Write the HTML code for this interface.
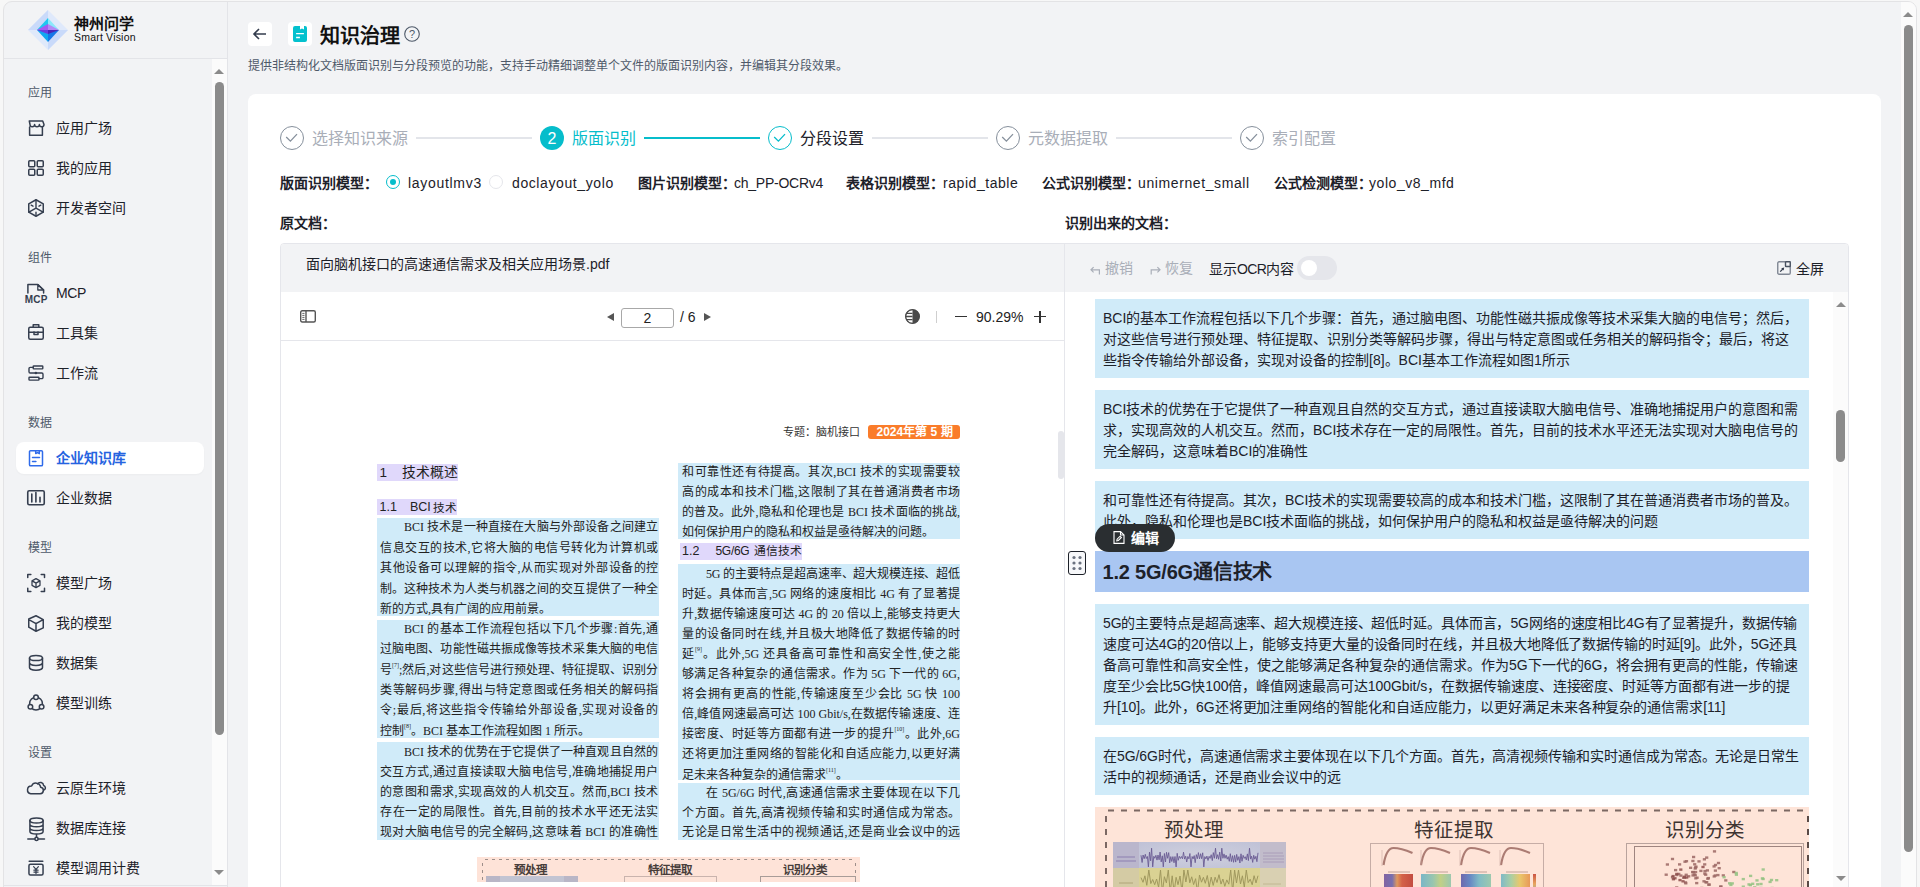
<!DOCTYPE html>
<html lang="zh-CN"><head><meta charset="utf-8"><title>知识治理</title>
<style>
*{box-sizing:border-box;margin:0;padding:0}
html,body{width:1920px;height:887px;overflow:hidden;background:#f7f7f7;font-family:"Liberation Sans",sans-serif;color:#1d2129}
.a{position:absolute}
.frame{left:3px;top:1px;width:1914px;height:1000px;border:1px solid #e3e3e5;border-radius:9px;background:#f2f3f5}
.side-div{left:227px;top:2px;width:1px;height:885px;background:#e3e4e8}
.logo-div{left:4px;top:58px;width:223px;height:1px;background:#e3e4e8}
.sec{left:28px;font-size:12px;color:#4e5969;line-height:16px}
.item{left:16px;width:188px;height:32px;border-radius:8px}
.item svg{position:absolute;left:12px;top:8px}
.item span{position:absolute;left:40px;top:0;line-height:32px;font-size:14px;color:#1d2129}
.item.on{background:#fff;box-shadow:0 1px 2px rgba(0,0,0,0.03)}
.item.on span{color:#2563e0;font-weight:bold}
.sb-track{background:#fbfbfb}
.thumb{background:#8b8b8b;border-radius:5px}
.tri-up{width:0;height:0;border-left:5px solid transparent;border-right:5px solid transparent;border-bottom:5px solid #8b8b8b}
.tri-dn{width:0;height:0;border-left:5px solid transparent;border-right:5px solid transparent;border-top:5px solid #8b8b8b}
</style></head><body>
<div class="a frame"></div>

<!-- SIDEBAR -->
<svg class="a" style="left:28px;top:10px" width="40" height="40" viewBox="0 0 40 40">
  <polygon points="20,0 40,20 20,40 0,20" fill="#dfe9fb"/>
  <polygon points="20,0 0,20 20,20" fill="#c9dafa"/>
  <polygon points="20,40 40,20 20,20" fill="#c9dafa"/>
  <polygon points="20,8 9,20 20,20" fill="#1fc8f0"/>
  <polygon points="20,8 31,20 20,20" fill="#8ae8fb"/>
  <polygon points="20,20 9,20 20,32" fill="#12a8f0"/>
  <polygon points="20,20 31,20 20,32" fill="#1677e8"/>
  <polygon points="20,14 9,20 20,20" fill="#a35cf2"/>
  <polygon points="20,14 31,20 20,20" fill="#b28af6"/>
  <polygon points="9,20 20,20 20,24" fill="#6a3fe0"/>
  <polygon points="31,20 20,20 20,24" fill="#4a25b8"/>
</svg>
<div class="a" style="left:74px;top:14px;font-size:15px;font-weight:bold;line-height:20px;color:#111">神州问学</div>
<div class="a" style="left:74px;top:31px;font-size:10.5px;line-height:13px;color:#111;letter-spacing:0.2px">Smart Vision</div>
<div class="a logo-div"></div>
<div class="a side-div"></div>
<div class="a" style="left:4px;top:885px;width:223px;height:1px;background:#e3e4e8"></div>

<div class="a sec" style="top:85px">应用</div>
<div class="a item" style="top:112px"><span>应用广场</span></div>
<div class="a item" style="top:152px"><span>我的应用</span></div>
<div class="a item" style="top:192px"><span>开发者空间</span></div>

<div class="a sec" style="top:250px">组件</div>
<div class="a item" style="top:277px"><span style="letter-spacing:-0.4px">MCP</span></div>
<div class="a item" style="top:317px"><span>工具集</span></div>
<div class="a item" style="top:357px"><span>工作流</span></div>

<div class="a sec" style="top:415px">数据</div>
<div class="a item on" style="top:442px"><span>企业知识库</span></div>
<div class="a item" style="top:482px"><span>企业数据</span></div>

<div class="a sec" style="top:540px">模型</div>
<div class="a item" style="top:567px"><span>模型广场</span></div>
<div class="a item" style="top:607px"><span>我的模型</span></div>
<div class="a item" style="top:647px"><span>数据集</span></div>
<div class="a item" style="top:687px"><span>模型训练</span></div>

<div class="a sec" style="top:745px">设置</div>
<div class="a item" style="top:772px"><span>云原生环境</span></div>
<div class="a item" style="top:812px"><span>数据库连接</span></div>
<div class="a item" style="top:852px"><span>模型调用计费</span></div>

<svg class="a" style="left:0;top:0" width="228" height="887" viewBox="0 0 228 887" fill="none" stroke="#353e4f" stroke-width="1.5" stroke-linejoin="round" stroke-linecap="round">
<path d="M29.3 121h13.4l1.3 3.5c0 1.3-1 2.3-2.3 2.3s-2.3-1-2.3-2.3c0 1.3-1.1 2.3-2.4 2.3s-2.4-1-2.4-2.3c0 1.3-1.1 2.3-2.4 2.3s-2.2-1-2.2-2.3z"/><path d="M29.6 127v8.3h12.8V127"/>
<rect x="28.75" y="160.75" width="6" height="6" rx="1"/><rect x="37.25" y="160.75" width="6" height="6" rx="1"/><rect x="28.75" y="169.25" width="6" height="6" rx="1"/><rect x="37.25" y="169.25" width="6" height="6" rx="1"/>
<path d="M36 199.75l7.25 4.1v8.3L36 216.25l-7.25-4.1v-8.3z"/><path d="M36 200v8.1M36 208.1l-7.1 4.05M36 208.1l7.1 4.05M36 212.2v2.4M31.2 205.2l1.8 1M40.8 205.2l-1.8 1" stroke-width="1.4"/>
<path d="M27.9 293V284.6h9.9l5.8 5.4V293"/><path d="M37.8 284.6v5.4h5.8z" stroke-width="1.3"/>
<text x="24.8" y="303" font-size="10" font-weight="bold" fill="#353e4f" stroke="none" font-family="Liberation Sans" textLength="22.5">MCP</text>
<path d="M33.2 327.2v-2.4h5.6v2.4"/><rect x="28.75" y="327.2" width="14.5" height="12" rx="1.5"/><path d="M28.75 332.2h14.5M34 331.8v2.6h4v-2.6"/>
<rect x="33.2" y="366" width="9.6" height="2.9" rx="0.6" stroke-width="1.4"/><rect x="29" y="377.2" width="10" height="2.9" rx="0.6" stroke-width="1.4"/><path d="M33.2 367.4H30.2a1.2 1.2 0 0 0-1.2 1.2v3.2a1.2 1.2 0 0 0 1.2 1.2h11.6a1.2 1.2 0 0 1 1.2 1.2v3.2a1.2 1.2 0 0 1-1.2 1.2H39" stroke-width="1.4"/><circle cx="35.9" cy="373" r="1.3" fill="#353e4f" stroke="none"/>
<g stroke="#2f6bea"><path d="M30.6 450.75h10.8a1.1 1.1 0 0 1 1.1 1.1v12.8a1.1 1.1 0 0 1-1.1 1.1H30.6a1.1 1.1 0 0 1-1.1-1.1V451.85a1.1 1.1 0 0 1 1.1-1.1z"/><path d="M35.7 451v2.6l1.8-1 1.8 1V451M32.5 457.6h7M32.5 461.5h3.4"/></g>
<rect x="27.75" y="490.75" width="16.5" height="14" rx="1.5" stroke-width="1.6"/><path d="M31.8 494v8M35.9 492.6v9.4M40 497.2v4.8" stroke-width="1.6"/>
<path d="M27.75 577.6v-3.1h3.1M41.2 574.5h3.3v3.1M44.5 588.2v3.3h-3.3M30.85 591.5h-3.1v-3.3"/><path d="M36 578.6l4 2.25v4.5L36 587.6l-4-2.25v-4.5zM32.2 580.9l3.8 2.2 3.8-2.2M36 583.1v4.3" stroke-width="1.3"/>
<path d="M36 615.75l7.25 3.9v8.2L36 631.25l-7.25-4.1v-8.1zM28.9 619.7l7.1 3.9 7.1-3.9M36 623.6v7.5"/>
<ellipse cx="36" cy="658" rx="6.5" ry="2.6"/><path d="M29.5 658v9.6c0 1.4 2.9 2.6 6.5 2.6s6.5-1.2 6.5-2.6V658M29.5 662.8c0 1.4 2.9 2.6 6.5 2.6s6.5-1.2 6.5-2.6"/>
<circle cx="36" cy="703.6" r="6.4"/><circle cx="36" cy="697.2" r="2.3" fill="#f2f3f5"/><circle cx="30.4" cy="706.8" r="2.3" fill="#f2f3f5"/><circle cx="41.6" cy="706.8" r="2.3" fill="#f2f3f5"/><path d="M31 710h10" stroke="#f2f3f5" stroke-width="0"/>
<path d="M30.8 793.7h9.4a3.3 3.3 0 0 0 .4-6.55 4.7 4.7 0 0 0-9-1.1 3.85 3.85 0 0 0-.8 7.65z"/><path d="M37.6 783.9a3.3 3.3 0 0 1 6 1.6 2.5 2.5 0 0 1 .9 4.3"/>
<ellipse cx="36.5" cy="820.6" rx="6.6" ry="2.5"/><path d="M29.9 820.6v10.9c0 1.4 2.95 2.5 6.6 2.5s6.6-1.1 6.6-2.5V820.6M29.9 824.3c0 1.4 2.95 2.5 6.6 2.5s6.6-1.1 6.6-2.5M29.9 827.9c0 1.4 2.95 2.5 6.6 2.5s6.6-1.1 6.6-2.5M36.5 834.1v3M27.8 838.9h7M38.1 838.9h6.4"/><circle cx="36.5" cy="838.9" r="1.6"/>
<path d="M29.2 861.2h13.6"/><rect x="28.95" y="864.3" width="14.1" height="10.6" rx="1.5"/><path d="M33.6 866.7l2.4 2.7 2.4-2.7M36 869.4v4.2M33.9 870.2h4.2M33.9 872.1h4.2" stroke-width="1.2"/>
</svg>
<div class="a sb-track" style="left:212px;top:59px;width:15px;height:826px"></div>
<div class="a tri-up" style="left:214px;top:69px"></div>
<div class="a thumb" style="left:215px;top:82px;width:9px;height:653px"></div>
<div class="a tri-dn" style="left:214px;top:870px"></div>

<!-- MAIN HEADER -->
<div class="a" style="left:248px;top:22px;width:24px;height:24px;background:#fff;border-radius:4px"></div>
<svg class="a" style="left:252px;top:26px" width="16" height="16" viewBox="0 0 16 16" fill="none" stroke="#333c4d" stroke-width="1.6"><path d="M14 8H2.5M7 3L2 8l5 5"/></svg>
<div class="a" style="left:288px;top:22px;width:24px;height:24px;background:#fff;border-radius:4px"></div>
<svg class="a" style="left:293px;top:26px" width="14" height="16" viewBox="0 0 14 16"><path d="M2 0h5v3.6l2-1.2 2 1.2V0h1a2 2 0 0 1 2 2v12a2 2 0 0 1-2 2H2a2 2 0 0 1-2-2V2a2 2 0 0 1 2-2z" fill="#03c1ce"/><path d="M3.1 7.6h7.8M3.1 11.5h3.8" stroke="#fff" stroke-width="1.3"/></svg>
<div class="a" style="left:320px;top:21.5px;font-size:20px;font-weight:bold;line-height:28px;color:#111">知识治理</div>
<svg class="a" style="left:404px;top:26px" width="16" height="16" viewBox="0 0 16 16"><circle cx="8" cy="8" r="7.3" fill="none" stroke="#4e5969" stroke-width="1.1"/><text x="8" y="12" text-anchor="middle" font-size="11" fill="#4e5969" font-family="Liberation Sans">?</text></svg>
<div class="a" style="left:248px;top:57.5px;font-size:12px;line-height:17px;color:#4e5969">提供非结构化文档版面识别与分段预览的功能，支持手动精细调整单个文件的版面识别内容，并编辑其分段效果。</div>

<!-- CARD -->
<div class="a" style="left:248px;top:94px;width:1633px;height:900px;background:#fff;border-radius:8px"></div>

<!-- main scrollbar -->
<div class="a sb-track" style="left:1901px;top:2px;width:15px;height:885px;border-top-right-radius:8px"></div>
<div class="a tri-up" style="left:1903px;top:12px"></div>
<div class="a thumb" style="left:1904px;top:25px;width:9px;height:827px"></div>

<style>
.step-c{width:24px;height:24px;border-radius:50%;border:1px solid #86909c;top:126px}
.step-t{top:128px;font-size:16px;line-height:22px;color:#a9aeb8}
.step-l{top:137px;height:2px;background:#e3e5ea;width:116px}
.lbl{top:173px;font-size:14px;line-height:21px;font-weight:bold;color:#1d2129}
.val{top:173px;font-size:14px;line-height:21px;color:#1d2129}
.radio{top:175px;width:14px;height:14px;border-radius:50%;border:1px solid #e5e6eb;background:#fff}
.radio.on{border:1.5px solid #06bdcb}
.radio.on:after{content:"";position:absolute;left:2.5px;top:2.5px;width:6px;height:6px;border-radius:50%;background:#06bdcb}
</style>
<!-- stepper -->
<div class="a step-c" style="left:280px"></div>
<svg class="a" style="left:280px;top:126px" width="24" height="24" viewBox="0 0 24 24" fill="none" stroke="#86909c" stroke-width="1.3"><path d="M6.2 11l4.2 4.1L17 8.1"/></svg>
<div class="a step-t" style="left:312px">选择知识来源</div>
<div class="a step-l" style="left:416px"></div>
<div class="a" style="left:540px;top:126px;width:24px;height:24px;border-radius:50%;background:#06bdcb;color:#fff;font-size:16px;line-height:26.5px;text-align:center">2</div>
<div class="a step-t" style="left:572px;color:#06bdcb">版面识别</div>
<div class="a step-l" style="left:644px;height:2px;top:137px;background:#06bdcb"></div>
<div class="a step-c" style="left:768px;border-color:#06bdcb"></div>
<svg class="a" style="left:768px;top:126px" width="24" height="24" viewBox="0 0 24 24" fill="none" stroke="#06bdcb" stroke-width="1.3"><path d="M6.2 11l4.2 4.1L17 8.1"/></svg>
<div class="a step-t" style="left:800px;color:#1d2129">分段设置</div>
<div class="a step-l" style="left:872px"></div>
<div class="a step-c" style="left:996px"></div>
<svg class="a" style="left:996px;top:126px" width="24" height="24" viewBox="0 0 24 24" fill="none" stroke="#86909c" stroke-width="1.3"><path d="M6.2 11l4.2 4.1L17 8.1"/></svg>
<div class="a step-t" style="left:1028px">元数据提取</div>
<div class="a step-l" style="left:1116px"></div>
<div class="a step-c" style="left:1240px"></div>
<svg class="a" style="left:1240px;top:126px" width="24" height="24" viewBox="0 0 24 24" fill="none" stroke="#86909c" stroke-width="1.3"><path d="M6.2 11l4.2 4.1L17 8.1"/></svg>
<div class="a step-t" style="left:1272px">索引配置</div>

<!-- models row -->
<div class="a lbl" style="left:280px">版面识别模型：</div>
<div class="a radio on" style="left:386px"></div>
<div class="a val" style="left:408px;letter-spacing:0.7px">layoutlmv3</div>
<div class="a radio" style="left:489px"></div>
<div class="a val" style="left:512px;letter-spacing:0.6px">doclayout_yolo</div>
<div class="a lbl" style="left:638px">图片识别模型：</div>
<div class="a val" style="left:734px;letter-spacing:-0.25px">ch_PP-OCRv4</div>
<div class="a lbl" style="left:846px">表格识别模型：</div>
<div class="a val" style="left:943px;letter-spacing:0.55px">rapid_table</div>
<div class="a lbl" style="left:1042px">公式识别模型：</div>
<div class="a val" style="left:1138px;letter-spacing:0.6px">unimernet_small</div>
<div class="a lbl" style="left:1274px">公式检测模型：</div>
<div class="a val" style="left:1369px;letter-spacing:0.55px">yolo_v8_mfd</div>

<div class="a lbl" style="left:280px;top:213px">原文档：</div>
<div class="a lbl" style="left:1065px;top:213px">识别出来的文档：</div>

<!-- panels frame -->
<div class="a" style="left:280px;top:243px;width:1569px;height:700px;border:1px solid #e5e6eb;border-radius:4px 4px 0 0;background:#fff"></div>
<div class="a" style="left:281px;top:244px;width:783px;height:48px;background:#f2f3f5;border-top-left-radius:3px"></div>
<div class="a" style="left:1065px;top:244px;width:783px;height:48px;background:#f2f3f5;border-top-right-radius:3px"></div>
<div class="a" style="left:1064px;top:244px;width:1px;height:643px;background:#e5e6eb"></div>
<div class="a" style="left:281px;top:340px;width:783px;height:1px;background:#e5e6eb"></div>

<style>
.pdf{font-family:"Liberation Serif",serif;color:#222}
.pb{background:#d0ebf9}
.ph{background:#e0d8fb}
.pl{position:absolute;left:0;white-space:nowrap;font-size:12px;line-height:20px;height:20px;text-align:justify;text-align-last:justify}
.pl.s{text-align:left;text-align-last:left}
.pl sup{font-size:6px;vertical-align:top;line-height:0;position:relative;top:5px}
.rb{position:absolute;left:1095px;width:714px;background:#d0ebf9;padding:9px 8px 7px}
.rl{white-space:nowrap;font-size:14px;line-height:21px;height:21px;color:#1d2129}
</style>
<!-- left header -->
<div class="a" style="left:306px;top:254px;font-size:14px;line-height:21px;color:#1d2129">面向脑机接口的高速通信需求及相关应用场景.pdf</div>
<!-- pdf toolbar -->
<svg class="a" style="left:300px;top:310px" width="16" height="13" viewBox="0 0 16 13" fill="none" stroke="#555" stroke-width="1.4"><rect x="0.7" y="0.7" width="14.6" height="11.3" rx="1.5"/><path d="M6 1v11"/><path d="M2.3 3.4h2.2M2.3 5.4h2.2M2.3 7.4h2.2M2.3 9.4h2.2" stroke-width="0.9"/></svg>
<div class="a" style="left:607px;top:313px;width:0;height:0;border-top:4px solid transparent;border-bottom:4px solid transparent;border-right:7px solid #555"></div>
<div class="a" style="left:621px;top:308px;width:53px;height:20px;border:1px solid #a8a8a8;border-radius:3px;background:#fff;font-size:14px;line-height:18px;text-align:center;color:#222">2</div>
<div class="a" style="left:680px;top:307px;font-size:14px;line-height:20px;color:#222">/ 6</div>
<div class="a" style="left:704px;top:313px;width:0;height:0;border-top:4px solid transparent;border-bottom:4px solid transparent;border-left:7px solid #555"></div>
<svg class="a" style="left:905px;top:309px" width="15" height="15" viewBox="0 0 15 15"><circle cx="7.5" cy="7.5" r="7" fill="#4a4a4a"/><path d="M7.5 1A6.5 6.5 0 0 0 7.5 14" fill="#fff"/><path d="M1 4.3h6.5M0.8 7.5h6.7M1 10.7h6.5" stroke="#4a4a4a" stroke-width="1.3"/><circle cx="7.5" cy="7.5" r="6.9" fill="none" stroke="#4a4a4a" stroke-width="1.2"/></svg>
<div class="a" style="left:936px;top:311px;width:1px;height:12px;background:#cfcfcf"></div>
<div class="a" style="left:955px;top:316px;width:12px;height:1.2px;background:#333"></div>
<div class="a" style="left:976px;top:307px;font-size:14px;line-height:21px;color:#222">90.29%</div>
<div class="a" style="left:1034px;top:316px;width:12px;height:1.2px;background:#333"></div>
<div class="a" style="left:1039.4px;top:310.5px;width:1.2px;height:12px;background:#333"></div>
<!-- pdf scrollbar thumb -->
<div class="a" style="left:1058px;top:431px;width:6px;height:48px;border-radius:3px;background:#e5e6eb"></div>

<!-- PDF PAGE -->
<div class="pdf">
<div class="a" style="left:783px;top:424px;font-size:11px;line-height:16px;color:#333">专题：脑机接口</div>
<div class="a" style="left:867.5px;top:425px;width:92px;height:14px;border-radius:3px;background:#fa7c2a;color:#fff;font-family:'Liberation Sans',sans-serif;font-weight:bold;font-size:12px;padding-left:2px;line-height:14px;text-align:center">2024年第 5 期</div>

<div class="a ph" style="left:376.5px;top:464px;width:81px;height:17px"><span style="position:absolute;top:0;line-height:17px;font-family:'Liberation Sans',sans-serif;color:#222;white-space:nowrap;left:3px;font-size:13.5px">1</span><span style="position:absolute;top:0;line-height:17px;font-family:'Liberation Sans',sans-serif;color:#222;white-space:nowrap;left:25.5px;font-size:13.8px">技术概述</span></div>
<div class="a ph" style="left:376.5px;top:498.5px;width:80.5px;height:16.5px"><span style="position:absolute;top:0;line-height:17px;font-family:'Liberation Sans',sans-serif;color:#222;white-space:nowrap;left:3px;font-size:12.5px">1.1</span><span style="position:absolute;top:0;line-height:17px;font-family:'Liberation Sans',sans-serif;color:#222;white-space:nowrap;left:33.5px;font-size:12.5px">BCI</span><span style="position:absolute;top:0;line-height:17px;font-family:'Liberation Sans',sans-serif;color:#222;white-space:nowrap;left:56.5px;font-size:11.6px">技术</span></div>

<div class="a pb" style="left:376.5px;top:518px;width:282px;height:97.5px"></div>
<div class="a" style="left:380px;top:517px;width:278px">
<div class="pl" style="top:0;left:24px;width:254px">BCI 技术是一种直接在大脑与外部设备之间建立</div>
<div class="pl" style="top:20.5px;width:278px">信息交互的技术,它将大脑的电信号转化为计算机或</div>
<div class="pl" style="top:41px;width:278px">其他设备可以理解的指令,从而实现对外部设备的控</div>
<div class="pl" style="top:61.5px;width:278px">制。这种技术为人类与机器之间的交互提供了一种全</div>
<div class="pl s" style="top:82px">新的方式,具有广阔的应用前景。</div>
</div>

<div class="a pb" style="left:376.5px;top:619.5px;width:282px;height:118px"></div>
<div class="a" style="left:380px;top:619px;width:278px">
<div class="pl" style="top:0;left:24px;width:254px">BCI 的基本工作流程包括以下几个步骤:首先,通</div>
<div class="pl" style="top:20.36px;width:278px">过脑电图、功能性磁共振成像等技术采集大脑的电信</div>
<div class="pl" style="top:40.72px;width:278px">号<sup>[7]</sup>;然后,对这些信号进行预处理、特征提取、识别分</div>
<div class="pl" style="top:61.08px;width:278px">类等解码步骤,得出与特定意图或任务相关的解码指</div>
<div class="pl" style="top:81.44px;width:278px">令;最后,将这些指令传输给外部设备,实现对设备的</div>
<div class="pl s" style="top:101.80px">控制<sup>[8]</sup>。BCI 基本工作流程如图 1 所示。</div>
</div>

<div class="a pb" style="left:376.5px;top:742px;width:282px;height:97.5px"></div>
<div class="a" style="left:380px;top:742px;width:278px">
<div class="pl" style="top:0;left:24px;width:254px">BCI 技术的优势在于它提供了一种直观且自然的</div>
<div class="pl" style="top:20px;width:278px">交互方式,通过直接读取大脑电信号,准确地捕捉用户</div>
<div class="pl" style="top:40px;width:278px">的意图和需求,实现高效的人机交互。然而,BCI 技术</div>
<div class="pl" style="top:60px;width:278px">存在一定的局限性。首先,目前的技术水平还无法实</div>
<div class="pl" style="top:80px;width:278px">现对大脑电信号的完全解码,这意味着 BCI 的准确性</div>
</div>

<div class="a pb" style="left:677.5px;top:462.5px;width:282.5px;height:76.5px"></div>
<div class="a" style="left:682px;top:462px;width:278px">
<div class="pl" style="top:0;width:278px">和可靠性还有待提高。其次,BCI 技术的实现需要较</div>
<div class="pl" style="top:20px;width:278px">高的成本和技术门槛,这限制了其在普通消费者市场</div>
<div class="pl" style="top:40px;width:278px">的普及。此外,隐私和伦理也是 BCI 技术面临的挑战,</div>
<div class="pl s" style="top:60px">如何保护用户的隐私和权益是亟待解决的问题。</div>
</div>

<div class="a ph" style="left:680px;top:543px;width:122px;height:17px"><span style="position:absolute;top:0;line-height:17px;font-family:'Liberation Sans',sans-serif;color:#222;white-space:nowrap;left:2px;font-size:12.5px">1.2</span><span style="position:absolute;top:0;line-height:17px;font-family:'Liberation Sans',sans-serif;color:#222;white-space:nowrap;left:35.5px;font-size:12px;letter-spacing:-0.3px">5G/6G</span><span style="position:absolute;top:0;line-height:17px;font-family:'Liberation Sans',sans-serif;color:#222;white-space:nowrap;left:74px;font-size:11.8px">通信技术</span></div>

<div class="a pb" style="left:677.5px;top:564px;width:282.5px;height:215.5px"></div>
<div class="a" style="left:682px;top:563.5px;width:278px">
<div class="pl" style="top:0;left:24px;width:254px;letter-spacing:-0.2px">5G 的主要特点是超高速率、超大规模连接、超低</div>
<div class="pl" style="top:20.1px;width:278px">时延。具体而言,5G 网络的速度相比 4G 有了显著提</div>
<div class="pl" style="top:40.2px;width:278px">升,数据传输速度可达 4G 的 20 倍以上,能够支持更大</div>
<div class="pl" style="top:60.3px;width:278px">量的设备同时在线,并且极大地降低了数据传输的时</div>
<div class="pl" style="top:80.4px;width:278px">延<sup>[9]</sup>。此外,5G 还具备高可靠性和高安全性,使之能</div>
<div class="pl" style="top:100.5px;width:278px">够满足各种复杂的通信需求。作为 5G 下一代的 6G,</div>
<div class="pl" style="top:120.6px;width:278px">将会拥有更高的性能,传输速度至少会比 5G 快 100</div>
<div class="pl" style="top:140.7px;width:278px">倍,峰值网速最高可达 100 Gbit/s,在数据传输速度、连</div>
<div class="pl" style="top:160.8px;width:278px">接密度、时延等方面都有进一步的提升<sup>[10]</sup>。此外,6G</div>
<div class="pl" style="top:180.9px;width:278px">还将更加注重网络的智能化和自适应能力,以更好满</div>
<div class="pl s" style="top:201.0px">足未来各种复杂的通信需求<sup>[11]</sup>。</div>
</div>

<div class="a pb" style="left:677.5px;top:783px;width:282.5px;height:57px"></div>
<div class="a" style="left:682px;top:783px;width:278px">
<div class="pl" style="top:0;left:24px;width:254px">在 5G/6G 时代,高速通信需求主要体现在以下几</div>
<div class="pl" style="top:20px;width:278px">个方面。首先,高清视频传输和实时通信成为常态。</div>
<div class="pl" style="top:39px;width:278px">无论是日常生活中的视频通话,还是商业会议中的远</div>
</div>

<!-- pdf figure -->
<div class="a" style="left:476.5px;top:857px;width:383.5px;height:25px;background:#fee3d8;overflow:hidden">
 <svg class="a" style="left:0;top:0" width="384" height="25" viewBox="0 0 384 25"><path d="M8 2.5H379" stroke="#9d8e8a" stroke-width="1" stroke-dasharray="3 4" fill="none"/><path d="M5.5 6V25M378.5 6V25" stroke="#9d8e8a" stroke-width="1" stroke-dasharray="3 4" fill="none"/></svg>
 <div class="a" style="left:37.5px;top:6px;font-size:11.5px;line-height:15px;color:#473d3a;font-weight:bold">预处理</div>
 <div class="a" style="left:171px;top:6px;font-size:11.5px;line-height:15px;color:#473d3a;font-weight:bold">特征提取</div>
 <div class="a" style="left:306px;top:6px;font-size:11.5px;line-height:15px;color:#473d3a;font-weight:bold">识别分类</div>
 <div class="a" style="left:9.5px;top:19px;width:92px;height:10px;background:#b9b6c6"></div><div class="a" style="left:23.5px;top:19px;width:64px;height:10px;background:#c2c4d2"></div>
 <div class="a" style="left:147px;top:19px;width:93px;height:10px;border:1px solid #c9b3ad"></div>
 <div class="a" style="left:283.5px;top:19px;width:96px;height:10px;border:1px solid #a89c98"></div>
</div>
</div>

<!-- right header -->
<svg class="a" style="left:1090px;top:265.5px" width="11" height="9" viewBox="0 0 11 9" fill="none" stroke="#a9aeb8" stroke-width="1.2"><path d="M3.6 1.2L1 3.8l2.6 2.6M1 3.8h8.4V8.5"/></svg>
<div class="a" style="left:1105px;top:258px;font-size:14px;line-height:21px;color:#a9aeb8">撤销</div>
<svg class="a" style="left:1150px;top:265.5px" width="11" height="9" viewBox="0 0 11 9" fill="none" stroke="#a9aeb8" stroke-width="1.2"><path d="M7.4 1.2L10 3.8 7.4 6.4M10 3.8H1.2V8.5"/></svg>
<div class="a" style="left:1165px;top:258px;font-size:14px;line-height:21px;color:#a9aeb8">恢复</div>
<div class="a" style="left:1209px;top:259px;font-size:14px;line-height:21px;color:#1d2129">显示<span style="letter-spacing:-0.6px">OCR</span>内容</div>
<div class="a" style="left:1297px;top:256px;width:40px;height:24px;border-radius:12px;background:#e5e6eb"></div>
<div class="a" style="left:1301px;top:260px;width:16px;height:16px;border-radius:50%;background:#fff"></div>
<svg class="a" style="left:1777px;top:261px" width="14" height="14" viewBox="0 0 14 14" fill="none"><rect x="0.75" y="0.75" width="12.5" height="12.5" rx="1.3" stroke="#808794" stroke-width="1.4"/><rect x="8.5" y="0.75" width="4.75" height="4.75" rx="0.6" stroke="#4a5362" stroke-width="1.4" fill="#f2f3f5"/><path d="M3.2 10.6L6.2 7.6" stroke="#333c4d" stroke-width="1.3"/><polygon points="7.2,6.6 4.2,7.2 6.6,9.6" fill="#333c4d"/></svg>
<div class="a" style="left:1796px;top:258.5px;font-size:14px;line-height:21px;color:#1d2129">全屏</div>

<!-- right inner scrollbar -->
<div class="a sb-track" style="left:1833px;top:292px;width:15px;height:595px"></div>
<div class="a tri-up" style="left:1835.5px;top:301.5px"></div>
<div class="a thumb" style="left:1835.5px;top:410px;width:9px;height:52px;border-radius:5px"></div>
<div class="a tri-dn" style="left:1835.5px;top:876px"></div>

<!-- right blocks -->
<div class="rb" style="top:299px">
<div class="rl">BCI的基本工作流程包括以下几个步骤：首先，通过脑电图、功能性磁共振成像等技术采集大脑的电信号；然后，</div>
<div class="rl">对这些信号进行预处理、特征提取、识别分类等解码步骤，得出与特定意图或任务相关的解码指令；最后，将这</div>
<div class="rl">些指令传输给外部设备，实现对设备的控制[8]。BCI基本工作流程如图1所示</div>
</div>
<div class="rb" style="top:390px">
<div class="rl">BCI技术的优势在于它提供了一种直观且自然的交互方式，通过直接读取大脑电信号、准确地捕捉用户的意图和需</div>
<div class="rl">求，实现高效的人机交互。然而，BCI技术存在一定的局限性。首先，目前的技术水平还无法实现对大脑电信号的</div>
<div class="rl">完全解码，这意味着BCI的准确性</div>
</div>
<div class="rb" style="top:481px">
<div class="rl">和可靠性还有待提高。其次，BCI技术的实现需要较高的成本和技术门槛，这限制了其在普通消费者市场的普及。</div>
<div class="rl">此外，隐私和伦理也是BCI技术面临的挑战，如何保护用户的隐私和权益是亟待解决的问题</div>
</div>
<div class="a" style="left:1095px;top:551px;width:714px;height:40.5px;background:#a9c6f2;padding-left:7.5px;font-size:20px;line-height:43px;letter-spacing:-0.2px;font-weight:bold;color:#1d2129;white-space:nowrap">1.2 5G/6G通信技术</div>
<div class="rb" style="top:604px">
<div class="rl" style="letter-spacing:-0.11px">5G的主要特点是超高速率、超大规模连接、超低时延。具体而言，5G网络的速度相比4G有了显著提升，数据传输</div>
<div class="rl" style="letter-spacing:-0.08px">速度可达4G的20倍以上，能够支持更大量的设备同时在线，并且极大地降低了数据传输的时延[9]。此外，5G还具</div>
<div class="rl">备高可靠性和高安全性，使之能够满足各种复杂的通信需求。作为5G下一代的6G，将会拥有更高的性能，传输速</div>
<div class="rl" style="letter-spacing:-0.06px">度至少会比5G快100倍，峰值网速最高可达100Gbit/s，在数据传输速度、连接密度、时延等方面都有进一步的提</div>
<div class="rl" style="letter-spacing:-0.04px">升[10]。此外，6G还将更加注重网络的智能化和自适应能力，以更好满足未来各种复杂的通信需求[11]</div>
</div>
<div class="rb" style="top:737px">
<div class="rl" style="letter-spacing:-0.06px">在5G/6G时代，高速通信需求主要体现在以下几个方面。首先，高清视频传输和实时通信成为常态。无论是日常生</div>
<div class="rl">活中的视频通话，还是商业会议中的远</div>
</div>

<!-- edit pill & drag handle -->
<div class="a" style="left:1095px;top:524px;width:80px;height:28px;border-radius:14px;background:#2a2e31"></div>
<svg class="a" style="left:1113px;top:530.5px" width="12" height="13" viewBox="0 0 12 13" fill="none" stroke="#fff" stroke-width="1.1"><path d="M1 .6h6.5L11 4v8.4H1z"/><path d="M7.5.6V4H11"/><path d="M3.8 9.8l.3-1.6 3-3 1.3 1.3-3 3z"/></svg>
<div class="a" style="left:1131px;top:527.5px;font-size:14px;line-height:21px;font-weight:bold;color:#fff">编辑</div>
<div class="a" style="left:1068px;top:551px;width:18px;height:24px;border:1.3px solid #1d2129;border-radius:3px;background:#f7f8fa"></div>
<svg class="a" style="left:1068px;top:551px" width="18" height="24" viewBox="0 0 18 24" fill="#6b7280"><circle cx="6" cy="6.5" r="1.6"/><circle cx="12" cy="6.5" r="1.6"/><circle cx="6" cy="12" r="1.6"/><circle cx="12" cy="12" r="1.6"/><circle cx="6" cy="17.5" r="1.6"/><circle cx="12" cy="17.5" r="1.6"/></svg>

<!-- right figure -->
<div class="a" style="left:1095px;top:807px;width:714px;height:80px;background:#fee4d8;overflow:hidden">
 <svg class="a" style="left:0;top:0" width="714" height="80" viewBox="0 0 714 80"><path d="M13 3.5H713.5" stroke="#7b6863" stroke-width="2" stroke-dasharray="6 7" fill="none"/><path d="M11 9V80" stroke="#7b6863" stroke-width="2" stroke-dasharray="6 7" fill="none"/><path d="M713 9V80" stroke="#5a4a46" stroke-width="2" stroke-dasharray="6 7" fill="none"/></svg>
 <div class="a" style="left:68.5px;top:9.5px;font-size:19.5px;line-height:26px;color:#3e3431">预处理</div>
 <div class="a" style="left:318.5px;top:9.5px;font-size:19.5px;line-height:26px;color:#3e3431">特征提取</div>
 <div class="a" style="left:569.5px;top:9.5px;font-size:19.5px;line-height:26px;color:#3e3431">识别分类</div>
 <div class="a" style="left:18px;top:35px;width:173px;height:50px;overflow:hidden">
  <div class="a" style="left:0;top:0;width:26px;height:26px;background:#bab6cc"></div>
  <div class="a" style="left:26px;top:0;width:121px;height:26px;background:radial-gradient(ellipse at 50% 50%,#cfd0de,#bfc1d6)"></div>
  <div class="a" style="left:147px;top:0;width:26px;height:26px;background:#c2bccb"></div>
  <div class="a" style="left:0;top:26px;width:26px;height:30px;background:#d4cba4"></div>
  <div class="a" style="left:26px;top:26px;width:121px;height:30px;background:#dad293"></div>
  <div class="a" style="left:147px;top:26px;width:26px;height:30px;background:#d9d0b2"></div>
  <svg class="a" style="left:0;top:0" width="173" height="50" viewBox="0 0 173 50" fill="none">
   <g transform="translate(26,0)"><path d="M2.0,13.3 L3.1,20.5 L4.1,13.0 L5.2,16.7 L6.3,12.3 L7.3,16.5 L8.4,14.5 L9.4,24.9 L10.5,10.1 L11.6,18.8 L12.6,6.2 L13.7,24.9 L14.8,14.3 L15.8,16.3 L16.9,13.3 L18.0,18.1 L19.0,13.0 L20.1,17.8 L21.1,10.0 L22.2,19.9 L23.3,13.8 L24.3,24.9 L25.4,11.5 L26.5,20.0 L27.5,10.3 L28.6,16.3 L29.7,10.6 L30.7,20.9 L31.8,14.6 L32.8,19.5 L33.9,14.6 L35.0,20.8 L36.0,14.5 L37.1,24.9 L38.2,11.3 L39.2,18.3 L40.3,14.3 L41.4,16.5 L42.4,14.5 L43.5,16.8 L44.5,10.2 L45.6,17.1 L46.7,14.2 L47.7,20.0 L48.8,14.5 L49.9,16.8 L50.9,11.5 L52.0,24.9 L53.1,14.5 L54.1,16.9 L55.2,13.6 L56.2,20.7 L57.3,12.6 L58.4,16.7 L59.4,10.6 L60.5,16.9 L61.6,11.7 L62.6,16.7 L63.7,10.8 L64.8,24.9 L65.8,14.6 L66.9,16.9 L67.9,14.1 L69.0,18.5 L70.1,14.3 L71.1,16.4 L72.2,12.7 L73.3,18.6 L74.3,10.6 L75.4,16.3 L76.5,6.2 L77.5,16.7 L78.6,12.7 L79.6,17.3 L80.7,10.1 L81.8,19.0 L82.8,6.2 L83.9,16.3 L85.0,11.9 L86.0,16.3 L87.1,13.1 L88.2,17.2 L89.2,14.6 L90.3,19.3 L91.3,11.7 L92.4,19.6 L93.5,13.7 L94.5,20.3 L95.6,13.4 L96.7,20.1 L97.7,12.4 L98.8,18.4 L99.9,14.6 L100.9,21.0 L102.0,11.8 L103.0,19.3 L104.1,13.3 L105.2,16.4 L106.2,14.7 L107.3,17.9 L108.4,11.9 L109.4,18.6 L110.5,6.2 L111.6,17.1 L112.6,14.2 L113.7,20.4 L114.7,13.3 L115.8,17.2 L116.9,14.3 L117.9,19.7 L119.0,10.8" stroke="#6a5b93" stroke-width="0.9"/><path d="M2.0,35.6 L4.0,40.3 L5.9,33.8 L7.8,43.3 L9.8,28.0 L11.8,41.6 L13.7,37.5 L15.7,42.7 L17.6,37.0 L19.6,45.4 L21.5,28.0 L23.4,50.0 L25.4,34.7 L27.4,40.9 L29.3,28.0 L31.2,50.0 L33.2,33.8 L35.1,50.0 L37.1,35.3 L39.0,42.7 L41.0,34.0 L43.0,50.0 L44.9,28.0 L46.9,40.0 L48.8,28.0 L50.8,40.8 L52.7,34.8 L54.6,42.6 L56.6,36.7 L58.5,50.0 L60.5,33.0 L62.5,40.2 L64.4,35.3 L66.3,41.3 L68.3,33.5 L70.2,45.0 L72.2,35.1 L74.2,43.4 L76.1,35.2 L78.0,40.5 L80.0,32.7 L82.0,42.1 L83.9,37.0 L85.8,44.3 L87.8,37.9 L89.8,42.2 L91.7,28.0 L93.7,50.0 L95.6,28.0 L97.5,41.0 L99.5,28.0 L101.5,42.0 L103.4,33.8 L105.3,45.1 L107.3,28.0 L109.2,40.6 L111.2,37.2 L113.2,42.8 L115.1,33.7 L117.0,40.9 L119.0,33.7" stroke="#a0985e" stroke-width="1"/></g>
   <path d="M4 15h18M3 19h20" stroke="#8c7fb0" stroke-width="1.2"/><path d="M150 11h20M150 14h21M150 17h21M150 20h21" stroke="#a89ab8" stroke-width="0.9"/>
   <path d="M6 41h14" stroke="#b0a478" stroke-width="1"/><path d="M150 42h18M150 46h20" stroke="#c0b490" stroke-width="0.9"/>
  </svg>
 </div>
 <div class="a" style="left:275px;top:35.5px;width:174px;height:50px;border:1px solid #c6ada6">
  <svg class="a" style="left:-1px;top:-1px" width="174" height="50" viewBox="0 0 174 50" fill="none">
   <path d="M13.5 22 C15.5 10 18.5 5 23.5 5 S35.5 7 42.5 10" stroke="#a27068" stroke-width="2.2" opacity="0.9"/><path d="M51.0 22 C53.0 10 56.0 5 61.0 5 S73.0 7 80.0 10" stroke="#a27068" stroke-width="2.2" opacity="0.9"/><path d="M91.0 22 C93.0 10 96.0 5 101.0 5 S113.0 7 120.0 10" stroke="#a27068" stroke-width="2.2" opacity="0.9"/><path d="M131.0 22 C133.0 10 136.0 5 141.0 5 S153.0 7 160.0 10" stroke="#a27068" stroke-width="2.2" opacity="0.9"/>
   <path d="M12 7v16M51 7v16M90 7v16M130 7v16" stroke="#c9aaa2" stroke-width="0.6"/>
   <path d="M18 29h22M56 29h22M95 29h22M136 29h22" stroke="#a88880" stroke-width="0.7"/>
  </svg>
  <div class="a" style="left:12.5px;top:30px;width:29px;height:20px;background:linear-gradient(90deg,#6d4c98,#5f5aa8 28%,#d98a48 45%,#cc4a30 62%,#b83226);opacity:.85"></div>
  <div class="a" style="left:50px;top:30px;width:30px;height:20px;background:linear-gradient(90deg,#62aec4,#86c0a8 40%,#b6cc78 65%,#8cc2a8);opacity:.85"></div>
  <div class="a" style="left:90px;top:30px;width:30px;height:20px;background:linear-gradient(90deg,#5552a6,#4d78c0 30%,#6ab4c2 60%,#8cc4a6);opacity:.85"></div>
  <div class="a" style="left:130px;top:30px;width:29px;height:20px;background:linear-gradient(90deg,#6ab2c4,#9ccb9a 35%,#e6c258 65%,#e48c42);opacity:.85"></div>
  <div class="a" style="left:161.5px;top:30px;width:3px;height:20px;background:linear-gradient(#c23a2a,#e49a48,#70b0c0);opacity:.85"></div>
 </div>
 <div class="a" style="left:530.5px;top:36px;width:178.5px;height:50px;border:1px solid #b9a39d">
  <div class="a" style="left:7px;top:2px;width:168px;height:50px;border:1px solid #9f8580"></div>
  <svg class="a" style="left:0;top:0" width="178" height="50" viewBox="0 0 178 50"><rect x="77.1" y="29.5" width="3.2" height="2.4" fill="#9b6764" opacity="0.85"/><rect x="64.3" y="15.8" width="3.2" height="2.4" fill="#9b6764" opacity="0.85"/><rect x="97.2" y="35.2" width="3.2" height="2.4" fill="#9b6764" opacity="0.85"/><rect x="85.5" y="21.2" width="3.2" height="2.4" fill="#9b6764" opacity="0.85"/><rect x="65.0" y="11.8" width="3.2" height="2.4" fill="#9b6764" opacity="0.85"/><rect x="80.5" y="39.4" width="3.2" height="2.4" fill="#9b6764" opacity="0.85"/><rect x="37.6" y="29.5" width="3.2" height="2.4" fill="#9b6764" opacity="0.85"/><rect x="78.1" y="12.4" width="3.2" height="2.4" fill="#9b6764" opacity="0.85"/><rect x="38.8" y="19.3" width="3.2" height="2.4" fill="#9b6764" opacity="0.85"/><rect x="57.9" y="16.0" width="3.2" height="2.4" fill="#9b6764" opacity="0.85"/><rect x="68.5" y="32.5" width="3.2" height="2.4" fill="#9b6764" opacity="0.85"/><rect x="78.1" y="37.0" width="3.2" height="2.4" fill="#9b6764" opacity="0.85"/><rect x="92.0" y="41.6" width="3.2" height="2.4" fill="#9b6764" opacity="0.85"/><rect x="47.0" y="24.9" width="3.2" height="2.4" fill="#9b6764" opacity="0.85"/><rect x="51.0" y="19.2" width="3.2" height="2.4" fill="#9b6764" opacity="0.85"/><rect x="66.7" y="30.1" width="3.2" height="2.4" fill="#9b6764" opacity="0.85"/><rect x="75.8" y="14.1" width="3.2" height="2.4" fill="#9b6764" opacity="0.85"/><rect x="48.2" y="29.8" width="3.2" height="2.4" fill="#9b6764" opacity="0.85"/><rect x="64.8" y="26.9" width="3.2" height="2.4" fill="#9b6764" opacity="0.85"/><rect x="67.0" y="22.4" width="3.2" height="2.4" fill="#9b6764" opacity="0.85"/><rect x="79.2" y="33.5" width="3.2" height="2.4" fill="#9b6764" opacity="0.85"/><rect x="66.6" y="23.3" width="3.2" height="2.4" fill="#9b6764" opacity="0.85"/><rect x="52.3" y="30.4" width="3.2" height="2.4" fill="#9b6764" opacity="0.85"/><rect x="43.9" y="32.0" width="3.2" height="2.4" fill="#9b6764" opacity="0.85"/><rect x="70.4" y="16.2" width="3.2" height="2.4" fill="#9b6764" opacity="0.85"/><rect x="64.0" y="26.9" width="3.2" height="2.4" fill="#9b6764" opacity="0.85"/><rect x="75.4" y="36.1" width="3.2" height="2.4" fill="#9b6764" opacity="0.85"/><rect x="67.4" y="21.5" width="3.2" height="2.4" fill="#9b6764" opacity="0.85"/><rect x="65.7" y="29.3" width="3.2" height="2.4" fill="#9b6764" opacity="0.85"/><rect x="79.8" y="32.9" width="3.2" height="2.4" fill="#9b6764" opacity="0.85"/><rect x="56.4" y="16.5" width="3.2" height="2.4" fill="#9b6764" opacity="0.85"/><rect x="62.0" y="22.6" width="3.2" height="2.4" fill="#9b6764" opacity="0.85"/><rect x="50.2" y="28.8" width="3.2" height="2.4" fill="#9b6764" opacity="0.85"/><rect x="60.1" y="31.1" width="3.2" height="2.4" fill="#9b6764" opacity="0.85"/><rect x="76.4" y="25.9" width="3.2" height="2.4" fill="#9b6764" opacity="0.85"/><rect x="105.2" y="26.8" width="3.2" height="2.4" fill="#9b6764" opacity="0.85"/><rect x="85.6" y="31.2" width="3.2" height="2.4" fill="#9b6764" opacity="0.85"/><rect x="85.9" y="6.2" width="3.2" height="2.4" fill="#9b6764" opacity="0.85"/><rect x="56.0" y="32.5" width="3.2" height="2.4" fill="#9b6764" opacity="0.85"/><rect x="77.6" y="53.4" width="3.2" height="2.4" fill="#9b6764" opacity="0.85"/><rect x="73.2" y="42.8" width="3.2" height="2.4" fill="#9b6764" opacity="0.85"/><rect x="80.3" y="39.5" width="3.2" height="2.4" fill="#9b6764" opacity="0.85"/><rect x="76.2" y="28.4" width="3.2" height="2.4" fill="#9b6764" opacity="0.85"/><rect x="76.1" y="19.2" width="3.2" height="2.4" fill="#9b6764" opacity="0.85"/><rect x="86.9" y="19.8" width="3.2" height="2.4" fill="#9b6764" opacity="0.85"/><rect x="72.0" y="51.2" width="3.2" height="2.4" fill="#9b6764" opacity="0.85"/><rect x="64.4" y="30.2" width="3.2" height="2.4" fill="#9b6764" opacity="0.85"/><rect x="86.6" y="30.3" width="3.2" height="2.4" fill="#9b6764" opacity="0.85"/><rect x="55.1" y="32.6" width="3.2" height="2.4" fill="#9b6764" opacity="0.85"/><rect x="77.3" y="37.1" width="3.2" height="2.4" fill="#9b6764" opacity="0.85"/><rect x="55.6" y="47.5" width="3.2" height="2.4" fill="#9b6764" opacity="0.85"/><rect x="94.7" y="30.2" width="3.2" height="2.4" fill="#9b6764" opacity="0.85"/><rect x="72.3" y="25.7" width="3.2" height="2.4" fill="#9b6764" opacity="0.85"/><rect x="90.6" y="23.0" width="3.2" height="2.4" fill="#9b6764" opacity="0.85"/><rect x="78.8" y="25.2" width="3.2" height="2.4" fill="#9b6764" opacity="0.85"/><rect x="56.9" y="37.2" width="3.2" height="2.4" fill="#9b6764" opacity="0.85"/><rect x="89.3" y="29.9" width="3.2" height="2.4" fill="#9b6764" opacity="0.85"/><rect x="57.2" y="38.1" width="3.2" height="2.4" fill="#9b6764" opacity="0.85"/><rect x="67.2" y="33.1" width="3.2" height="2.4" fill="#9b6764" opacity="0.85"/><rect x="92.4" y="41.3" width="3.2" height="2.4" fill="#9b6764" opacity="0.85"/><rect x="59.7" y="52.8" width="3.2" height="2.4" fill="#9b6764" opacity="0.85"/><rect x="68.1" y="37.9" width="3.2" height="2.4" fill="#9b6764" opacity="0.85"/><rect x="57.6" y="29.6" width="3.2" height="2.4" fill="#9b6764" opacity="0.85"/><rect x="40.0" y="47.9" width="3.2" height="2.4" fill="#9b6764" opacity="0.85"/><rect x="89.9" y="17.8" width="3.2" height="2.4" fill="#9b6764" opacity="0.85"/><rect x="43.9" y="13.8" width="3.2" height="2.4" fill="#9b6764" opacity="0.85"/><rect x="86.8" y="25.4" width="3.2" height="2.4" fill="#9b6764" opacity="0.85"/><rect x="67.0" y="26.9" width="3.2" height="2.4" fill="#9b6764" opacity="0.85"/><rect x="66.1" y="19.1" width="3.2" height="2.4" fill="#9b6764" opacity="0.85"/><rect x="52.2" y="24.4" width="3.2" height="2.4" fill="#8d4d4b" opacity="0.85"/><rect x="51.4" y="34.9" width="3.2" height="2.4" fill="#8d4d4b" opacity="0.85"/><rect x="55.7" y="31.6" width="3.2" height="2.4" fill="#8d4d4b" opacity="0.85"/><rect x="44.8" y="34.0" width="3.2" height="2.4" fill="#8d4d4b" opacity="0.85"/><rect x="48.1" y="42.4" width="3.2" height="2.4" fill="#8d4d4b" opacity="0.85"/><rect x="58.1" y="32.3" width="3.2" height="2.4" fill="#8d4d4b" opacity="0.85"/><rect x="48.2" y="28.8" width="3.2" height="2.4" fill="#8d4d4b" opacity="0.85"/><rect x="44.5" y="30.9" width="3.2" height="2.4" fill="#8d4d4b" opacity="0.85"/><rect x="54.4" y="36.1" width="3.2" height="2.4" fill="#8d4d4b" opacity="0.85"/><rect x="56.6" y="45.6" width="3.2" height="2.4" fill="#8d4d4b" opacity="0.85"/><rect x="46.4" y="33.1" width="3.2" height="2.4" fill="#8d4d4b" opacity="0.85"/><rect x="74.4" y="21.8" width="3.2" height="2.4" fill="#8d4d4b" opacity="0.85"/><rect x="114.7" y="41.5" width="3.2" height="2.4" fill="#93c283" opacity="0.85"/><rect x="124.2" y="43.7" width="3.2" height="2.4" fill="#93c283" opacity="0.85"/><rect x="118.7" y="43.3" width="3.2" height="2.4" fill="#93c283" opacity="0.85"/><rect x="122.7" y="46.9" width="3.2" height="2.4" fill="#93c283" opacity="0.85"/><rect x="95.5" y="32.0" width="3.2" height="2.4" fill="#93c283" opacity="0.85"/><rect x="122.0" y="30.7" width="3.2" height="2.4" fill="#93c283" opacity="0.85"/><rect x="107.4" y="45.6" width="3.2" height="2.4" fill="#93c283" opacity="0.85"/><rect x="112.9" y="45.7" width="3.2" height="2.4" fill="#93c283" opacity="0.85"/><rect x="132.4" y="42.8" width="3.2" height="2.4" fill="#93c283" opacity="0.85"/><rect x="129.1" y="39.1" width="3.2" height="2.4" fill="#93c283" opacity="0.85"/><rect x="102.3" y="39.7" width="3.2" height="2.4" fill="#93c283" opacity="0.85"/><rect x="128.4" y="35.2" width="3.2" height="2.4" fill="#93c283" opacity="0.85"/><rect x="120.6" y="46.7" width="3.2" height="2.4" fill="#93c283" opacity="0.85"/><rect x="109.7" y="45.8" width="3.2" height="2.4" fill="#93c283" opacity="0.85"/><rect x="148.1" y="35.0" width="3.2" height="2.4" fill="#93c283" opacity="0.85"/><rect x="124.1" y="38.6" width="3.2" height="2.4" fill="#93c283" opacity="0.85"/><rect x="143.6" y="42.8" width="3.2" height="2.4" fill="#93c283" opacity="0.85"/><rect x="134.6" y="33.8" width="3.2" height="2.4" fill="#93c283" opacity="0.85"/><rect x="121.8" y="39.9" width="3.2" height="2.4" fill="#93c283" opacity="0.85"/><rect x="97.1" y="53.0" width="3.2" height="2.4" fill="#93c283" opacity="0.85"/><rect x="134.6" y="24.3" width="3.2" height="2.4" fill="#93c283" opacity="0.85"/><rect x="132.4" y="38.8" width="3.2" height="2.4" fill="#93c283" opacity="0.85"/><rect x="128.3" y="43.3" width="3.2" height="2.4" fill="#93c283" opacity="0.85"/><rect x="101.0" y="38.1" width="3.2" height="2.4" fill="#93c283" opacity="0.85"/><rect x="142.9" y="34.8" width="3.2" height="2.4" fill="#93c283" opacity="0.85"/><rect x="107.7" y="27.8" width="3.2" height="2.4" fill="#93c283" opacity="0.85"/><rect x="104.9" y="43.0" width="3.2" height="2.4" fill="#93c283" opacity="0.85"/><rect x="145.7" y="43.9" width="3.2" height="2.4" fill="#93c283" opacity="0.85"/><rect x="114.7" y="33.9" width="3.2" height="2.4" fill="#93c283" opacity="0.85"/><rect x="129.4" y="44.9" width="3.2" height="2.4" fill="#93c283" opacity="0.85"/><rect x="107.8" y="29.5" width="3.2" height="2.4" fill="#93c283" opacity="0.85"/><rect x="126.1" y="42.2" width="3.2" height="2.4" fill="#93c283" opacity="0.85"/><rect x="103.7" y="38.2" width="3.2" height="2.4" fill="#93c283" opacity="0.85"/><rect x="114.4" y="44.1" width="3.2" height="2.4" fill="#93c283" opacity="0.85"/><rect x="120.4" y="39.2" width="3.2" height="2.4" fill="#93c283" opacity="0.85"/><rect x="117.1" y="49.5" width="3.2" height="2.4" fill="#93c283" opacity="0.85"/><rect x="141.5" y="36.7" width="3.2" height="2.4" fill="#93c283" opacity="0.85"/><rect x="133.8" y="33.2" width="3.2" height="2.4" fill="#93c283" opacity="0.85"/><rect x="123.0" y="46.7" width="3.2" height="2.4" fill="#93c283" opacity="0.85"/></svg>
 </div>
</div>
<!--CONTENT-->

</body></html>
